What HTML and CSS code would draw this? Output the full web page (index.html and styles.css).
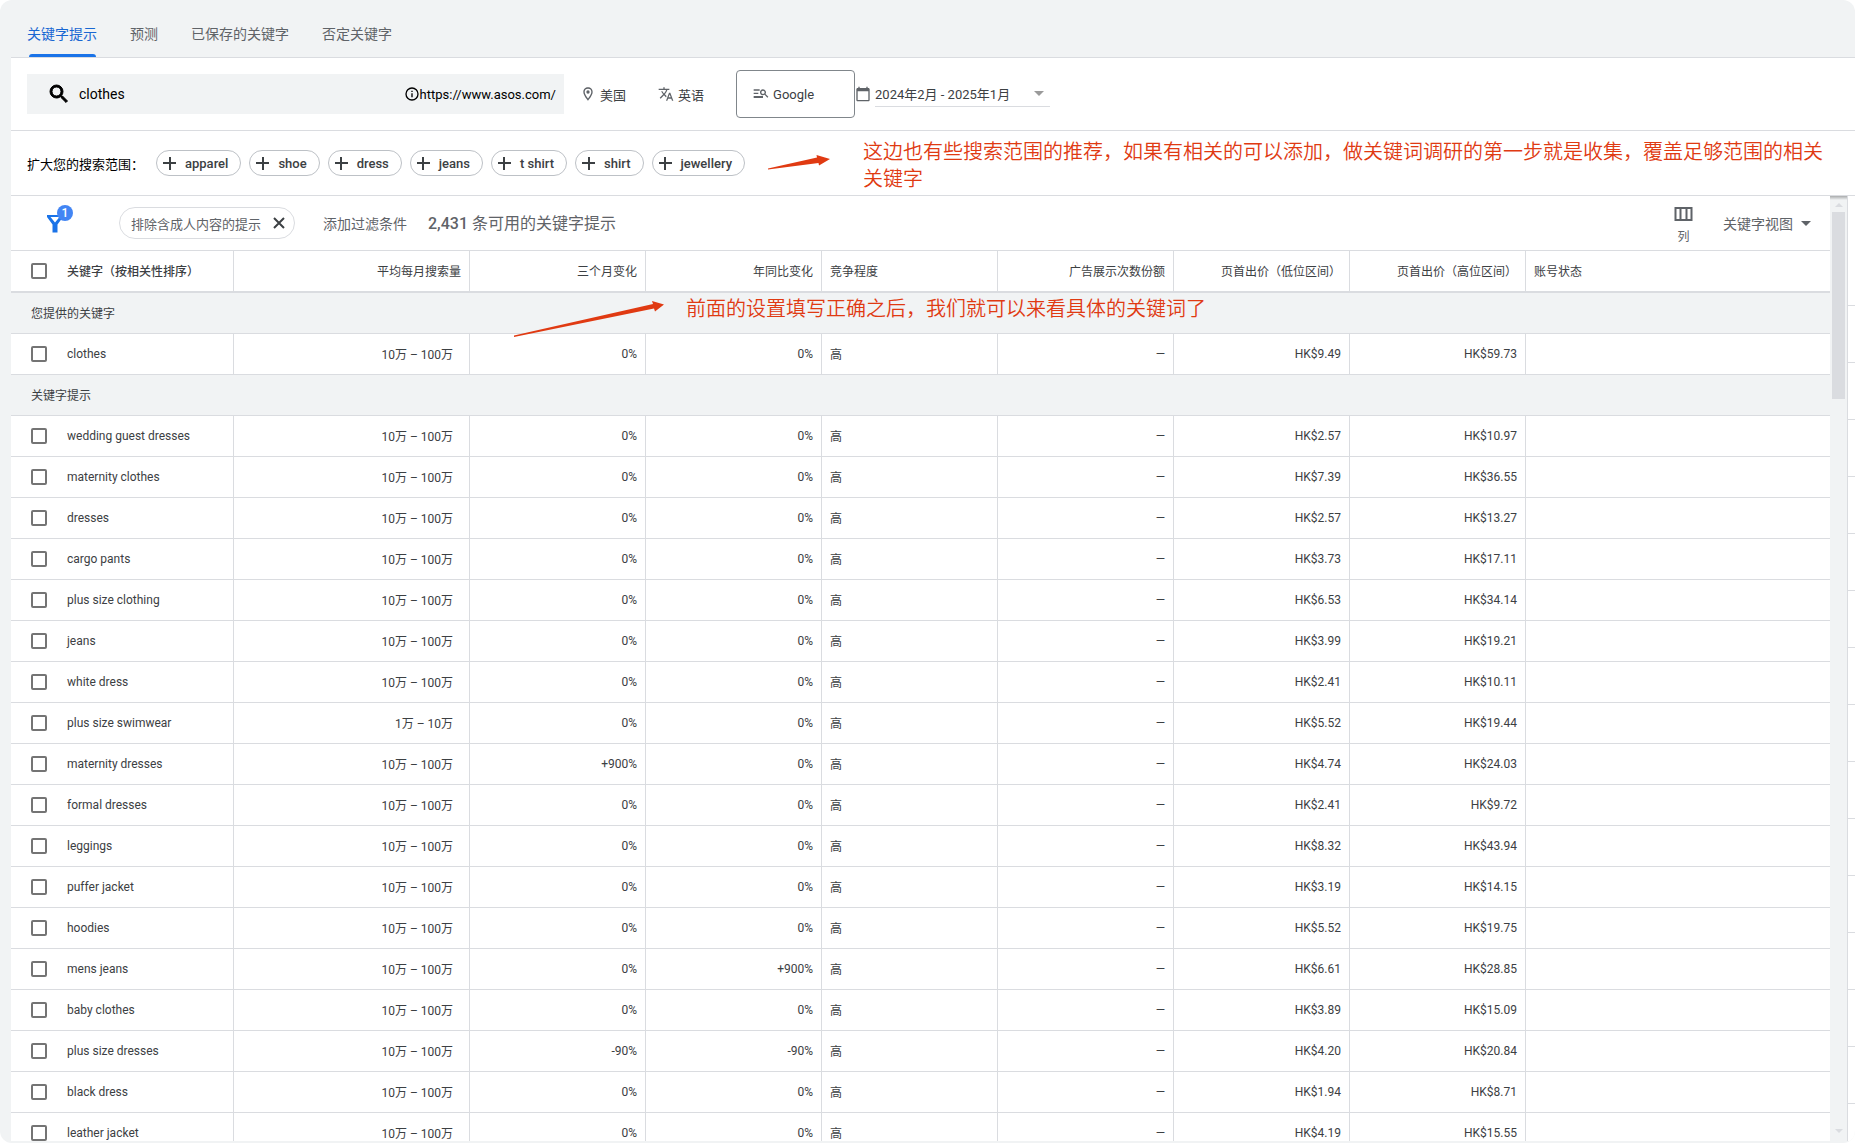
FILE: index.html
```html
<!DOCTYPE html>
<html lang="zh-CN">
<head>
<meta charset="utf-8">
<title>关键字提示</title>
<link rel="stylesheet" href="styles.css">
</head>
<body>
<div class="app">
  <nav class="tabs">
    <a class="tab tab-active" href="#ideas">关键字提示</a>
    <a class="tab" href="#forecast">预测</a>
    <a class="tab" href="#saved">已保存的关键字</a>
    <a class="tab" href="#negative">否定关键字</a>
  </nav>

  <div class="search-row">
    <div class="search-box">
      <svg class="icon-search" viewBox="0 0 24 24"><path d="M15.5 14h-.79l-.28-.27A6.47 6.47 0 0 0 16 9.5 6.5 6.5 0 1 0 9.5 16c1.61 0 3.09-.59 4.23-1.57l.27.28v.79l5 4.99L20.49 19l-4.99-5zm-6 0C7.01 14 5 11.99 5 9.5S7.01 5 9.5 5 14 7.01 14 9.5 11.99 14 9.5 14z"/></svg>
      <input class="search-input" type="text" value="clothes" aria-label="关键字">
      <svg class="icon-info" viewBox="0 0 24 24"><path d="M11 7h2v2h-2zm0 4h2v6h-2zm1-9a10 10 0 1 0 0 20 10 10 0 0 0 0-20zm0 18a8 8 0 1 1 0-16 8 8 0 0 1 0 16z"/></svg>
      <span class="site">https://www.asos.com/</span>
    </div>
    <button class="setting setting-place" type="button">
      <svg class="icon-small" viewBox="0 0 24 24"><path d="M12 2C8.13 2 5 5.13 5 9c0 5.25 7 13 7 13s7-7.75 7-13c0-3.87-3.13-7-7-7zM7 9a5 5 0 0 1 10 0c0 2.88-2.88 7.19-5 9.88C9.92 16.21 7 11.85 7 9z"/><circle cx="12" cy="9" r="2.5"/></svg>
      <span>美国</span>
    </button>
    <button class="setting setting-lang" type="button">
      <svg class="icon-small" viewBox="0 0 24 24"><path d="M12.87 15.07l-2.54-2.51.03-.03A17.52 17.52 0 0 0 14.07 6H17V4h-7V2H8v2H1v2h11.17C11.5 7.92 10.44 9.75 9 11.35 8.07 10.32 7.3 9.19 6.69 8h-2c.73 1.63 1.73 3.17 2.98 4.56l-5.09 5.02L4 19l5-5 3.11 3.11.76-2.04zM18.5 10h-2L12 22h2l1.12-3h4.75L21 22h2l-4.500-12zm-2.620 7l1.620-4.330L19.120 17h-3.240z"/></svg>
      <span>英语</span>
    </button>
    <button class="network" type="button">
      <svg class="icon-small" viewBox="0 0 24 24"><path d="M1 5h9v2H1zm0 5h7v2H1zm0 5h14v3H1zM15 5a4.500 4.500 0 1 0 2.400 8.300L21.600 17.500 23 16.100l-4.200-4.200A4.500 4.500 0 0 0 15 5zm0 2a2.500 2.500 0 1 1 0 5 2.500 2.500 0 0 1 0-5z"/></svg>
      <span>Google</span>
    </button>
    <button class="dates" type="button">
      <svg class="icon-small" viewBox="0 0 24 24"><path d="M20 3h-1V1h-2v2H7V1H5v2H4c-1.100 0-2 .9-2 2v16c0 1.100.9 2 2 2h16c1.100 0 2-.9 2-2V5c0-1.100-.9-2-2-2zm0 18H4V8h16v13z"/></svg>
      <span class="dates-value"><span>2024年2月 - 2025年1月</span><span class="caret caret-light"></span></span>
    </button>
  </div>

  <div class="broaden">
    <span class="broaden-label">扩大您的搜索范围：</span>
    <div class="chips">
      <button class="chip" type="button"><span class="plus"></span>apparel</button>
      <button class="chip" type="button"><span class="plus"></span>shoe</button>
      <button class="chip" type="button"><span class="plus"></span>dress</button>
      <button class="chip" type="button"><span class="plus"></span>jeans</button>
      <button class="chip" type="button"><span class="plus"></span>t shirt</button>
      <button class="chip" type="button"><span class="plus"></span>shirt</button>
      <button class="chip" type="button"><span class="plus"></span>jewellery</button>
    </div>
    <svg class="arrow-short" viewBox="0 0 62 16"><path d="M0 13.500L49 2.500 48.500 0 62 4 51 10.500 50.500 8 0 14.500z"/></svg>
    <p class="note">这边也有些搜索范围的推荐，如果有相关的可以添加，做关键词调研的第一步就是收集，覆盖足够范围的相关关键字</p>
  </div>

  <div class="results">
    <div class="panel">
      <div class="toolbar">
        <button class="filter" type="button" aria-label="过滤条件">
          <svg class="icon-filter" viewBox="0 0 16 18"><path d="M0 0h16v2L10.500 9.500V17.500H5.500V9.500L0 2zM3.500 2L8 7.600 12.500 2z"/></svg>
          <span class="badge">1</span>
        </button>
        <button class="filter-chip" type="button"><span>排除含成人内容的提示</span>
          <svg class="icon-close" viewBox="0 0 12 12"><path d="M1 1l10 10M11 1L1 11"/></svg>
        </button>
        <button class="add-filter" type="button">添加过滤条件</button>
        <span class="count"><b>2,431</b> 条可用的关键字提示</span>
        <button class="columns" type="button">
          <svg class="icon-columns" viewBox="0 0 18 14"><path d="M0 0h18v14H0zM2 2v10h3V2zm5 0v10h4V2zm6 0v10h3V2z" fill-rule="evenodd"/></svg>
          <span>列</span>
        </button>
        <button class="view" type="button">关键字视图<span class="caret"></span></button>
      </div>
      <table class="grid">
        <colgroup><col class="c-key"><col class="c-vol"><col class="c-std"><col class="c-std"><col class="c-std"><col class="c-std"><col class="c-std"><col class="c-std"><col></colgroup>
        <thead>
          <tr><th class="key"><label><input type="checkbox"><b>关键字（按相关性排序）</b></label></th><th>平均每月搜索量</th><th>三个月变化</th><th>年同比变化</th><th class="left">竞争程度</th><th>广告展示次数份额</th><th>页首出价（低位区间）</th><th>页首出价（高位区间）</th><th class="left">账号状态</th></tr>
        </thead>
        <tbody id="rows"></tbody>
      </table>
      <svg class="arrow-long" viewBox="0 0 152 36"><path d="M0 34.500L139 3 138 0 150 3.500 141 10.500 140 7.500 0 36z"/></svg>
      <p class="note note-table">前面的设置填写正确之后，我们就可以来看具体的关键词了</p>
    </div>
    <div class="scrollbar"><span class="sb-up"></span><span class="sb-thumb"></span><span class="sb-down"></span></div>
    <div class="edge"></div>
  </div>
</div>
<script src="rows.js"></script>
</body>
</html>
```
FILE: rows.js
```js
const provided = [["clothes", "9.49", "59.73"]];
const ideas = [
  ["wedding guest dresses", "2.57", "10.97"],
  ["maternity clothes", "7.39", "36.55"],
  ["dresses", "2.57", "13.27"],
  ["cargo pants", "3.73", "17.11"],
  ["plus size clothing", "6.53", "34.14"],
  ["jeans", "3.99", "19.21"],
  ["white dress", "2.41", "10.11"],
  ["plus size swimwear", "5.52", "19.44", { volume: "1万 – 10万" }],
  ["maternity dresses", "4.74", "24.03", { quarter: "+900%" }],
  ["formal dresses", "2.41", "9.72"],
  ["leggings", "8.32", "43.94"],
  ["puffer jacket", "3.19", "14.15"],
  ["hoodies", "5.52", "19.75"],
  ["mens jeans", "6.61", "28.85", { year: "+900%" }],
  ["baby clothes", "3.89", "15.09"],
  ["plus size dresses", "4.20", "20.84", { quarter: "-90%", year: "-90%" }],
  ["black dress", "1.94", "8.71"],
  ["leather jacket", "4.19", "15.55"]
];

const section = (title) => `<tr class="section"><td colspan="9">${title}</td></tr>`;

const row = ([name, low, high, extra = {}]) => `<tr>
  <td class="key"><label><input type="checkbox"><span>${name}</span></label></td>
  <td class="volume">${extra.volume || "10万 – 100万"}</td>
  <td>${extra.quarter || "0%"}</td>
  <td>${extra.year || "0%"}</td>
  <td class="left level">高</td>
  <td>—</td>
  <td>HK$${low}</td>
  <td>HK$${high}</td>
  <td class="left"></td>
</tr>`;

document.getElementById("rows").innerHTML =
  section("您提供的关键字") + provided.map(row).join("") +
  section("关键字提示") + ideas.map(row).join("");
```
FILE: styles.css
```css
* { box-sizing: border-box; }

html { background: #fff; }

body {
  margin: 0;
  font-family: Roboto, "Noto Sans CJK SC", sans-serif;
  font-size: 14px;
  color: #3c4043;
}

button {
  margin: 0;
  padding: 0;
  border: 0;
  background: none;
  font: inherit;
  color: inherit;
}

svg { flex: none; fill: currentColor; }

.app {
  display: flex;
  flex-direction: column;
  height: 100vh;
  padding: 0 0 2px 11px;
  background: #f1f3f4;
  border-radius: 12px;
  overflow: hidden;
}

.tabs {
  flex: none;
  display: flex;
  gap: 33px;
  height: 58px;
  padding-left: 16px;
  border-bottom: 1px solid #dadce0;
}

.tab {
  position: relative;
  line-height: 68px;
  color: #5f6368;
  text-decoration: none;
}

.tab-active { color: #1967d2; }

.tab-active::after {
  content: "";
  position: absolute;
  left: 2px;
  right: 1px;
  bottom: 0;
  height: 3px;
  border-radius: 3px 3px 0 0;
  background: #1a73e8;
}

.search-row {
  flex: none;
  display: flex;
  align-items: center;
  height: 73px;
  padding-left: 16px;
  background: #fff;
  border-bottom: 1px solid #dadce0;
  font-size: 13px;
}

.search-box {
  display: flex;
  align-items: center;
  width: 537px;
  height: 40px;
  padding: 0 8px 0 20px;
  background: #f1f3f4;
  color: #000;
}

.icon-search { width: 24px; height: 24px; stroke: currentColor; }

.search-input {
  flex: 1;
  min-width: 0;
  margin-left: 8px;
  padding: 0;
  border: 0;
  background: none;
  font: inherit;
  font-size: 14px;
  color: inherit;
}

.icon-info { width: 16px; height: 16px; }

.icon-small { width: 16px; height: 16px; color: #5f6368; }

.setting { display: flex; align-items: center; gap: 4px; }
.setting-place { margin-left: 16px; }
.setting-lang { margin-left: 32px; }

.network {
  display: flex;
  align-items: center;
  gap: 4px;
  width: 119px;
  height: 48px;
  margin-left: 32px;
  padding-left: 16px;
  border: 1px solid #80868b;
  border-radius: 4px;
}

.dates { display: flex; align-items: center; gap: 4px; }

.dates-value {
  display: flex;
  align-items: center;
  justify-content: space-between;
  width: 175px;
  height: 25px;
  padding-right: 6px;
  border-bottom: 1px solid #dadce0;
}

.caret {
  border: 5px solid transparent;
  border-top-color: #5f6368;
  border-bottom: 0;
}

.caret-light { border-top-color: #9a9a9a; }

.broaden {
  flex: none;
  display: flex;
  align-items: center;
  height: 65px;
  padding: 0 24px 0 16px;
  background: #fff;
  border-bottom: 1px solid #dadce0;
}

.broaden-label { width: 129px; font-size: 13px; color: #000; white-space: nowrap; }

.chips { display: flex; gap: 8px; }

.chip {
  display: flex;
  align-items: center;
  gap: 9px;
  height: 26px;
  padding: 0 12px 0 6px;
  border: 1px solid #bdc1c6;
  border-radius: 13px;
  font-size: 13px;
  font-weight: 500;
}

.plus {
  width: 13px;
  height: 13px;
  background:
    linear-gradient(#3c4043, #3c4043) center / 13px 2px no-repeat,
    linear-gradient(#3c4043, #3c4043) center / 2px 13px no-repeat;
}

.arrow-short { width: 62px; height: 16px; margin-left: 23px; color: #e03a12; }

.note {
  margin: 0;
  font-family: "Noto Sans CJK SC", sans-serif;
  font-size: 20px;
  font-weight: 350;
  line-height: 27px;
  color: #e03a12;
}

.broaden .note { flex: 1; margin-left: 33px; padding-top: 1px; }

.results { flex: 1; min-height: 0; display: flex; }

.panel {
  position: relative;
  flex: 1;
  min-width: 0;
  overflow: hidden;
  background: #fff;
}

.toolbar {
  display: flex;
  align-items: center;
  height: 55px;
  padding: 0 19px 0 36px;
  border-bottom: 1px solid #dadce0;
  color: #5f6368;
}

.filter { position: relative; width: 26px; height: 36px; color: #1a73e8; }
.icon-filter { display: block; width: 16px; height: 18px; margin-top: 2px; }

.badge {
  position: absolute;
  top: 0;
  right: 0;
  width: 16px;
  height: 16px;
  border-radius: 8px;
  background: #4285f4;
  color: #fff;
  font-size: 12px;
  font-weight: 500;
  line-height: 16px;
}

.filter-chip {
  display: flex;
  align-items: center;
  gap: 12px;
  height: 32px;
  margin-left: 46px;
  padding: 0 9px 0 11px;
  border: 1px solid #dadce0;
  border-radius: 16px;
  font-size: 13px;
}

.icon-close { width: 12px; height: 12px; stroke: #3c4043; stroke-width: 2; }
.add-filter { margin-left: 28px; }
.count { margin-left: 21px; padding-bottom: 3px; font-size: 16px; }
.count b { font-weight: 500; }

.columns {
  display: flex;
  flex-direction: column;
  align-items: center;
  gap: 7px;
  margin-left: auto;
  padding-top: 7px;
  font-size: 12px;
  line-height: 18px;
}

.icon-columns { width: 19px; height: 14px; }
.view { display: flex; align-items: center; gap: 8px; margin-left: 30px; }

.grid {
  width: 100%;
  table-layout: fixed;
  border-collapse: separate;
  border-spacing: 0;
  font-size: 12px;
}

.c-key { width: 223px; }
.c-vol { width: 236px; }
.c-std { width: 176px; }

.grid th,
.grid td {
  height: 41px;
  padding: 0 8px;
  border-right: 1px solid #dadce0;
  border-bottom: 1px solid #dadce0;
  font-weight: 400;
  text-align: right;
  line-height: 18px;
  white-space: nowrap;
}

.grid th { height: 42px; padding-top: 2px; border-bottom-width: 2px; }
.grid th:last-child, .grid td:last-child { border-right: 0; }
.grid .left { text-align: left; }
.grid .level { padding-top: 2px; }
.grid .key { padding-top: 0; padding-left: 20px; text-align: left; }
.grid .volume { padding-top: 2px; padding-right: 16px; }
.grid .section td { padding-top: 2px; padding-left: 20px; background: #f1f3f4; text-align: left; }

.key label { display: flex; align-items: center; gap: 20px; }
.key b { padding-top: 2px; font-weight: 500; }

.key input {
  appearance: none;
  width: 16px;
  height: 16px;
  margin: 0;
  border: 2px solid #747474;
  border-radius: 2px;
}

.arrow-long {
  position: absolute;
  left: 503px;
  top: 105px;
  width: 152px;
  height: 36px;
  color: #e03a12;
}

.note-table { position: absolute; left: 675px; top: 98px; white-space: nowrap; }

.scrollbar {
  display: flex;
  flex-direction: column;
  align-items: center;
  width: 18px;
  padding: 7px 0 8px;
  background: linear-gradient(#a9abac, #f1f3f4 4px);
  border-right: 1px solid #dadce0;
}

.sb-up { border: 4px solid transparent; border-bottom-color: #dadce0; border-top: 0; }
.sb-thumb { width: 13px; height: 187px; margin-top: 5px; background: #dadce0; }
.sb-down { margin-top: auto; border: 4px solid transparent; border-top-color: #dadce0; border-bottom: 0; }

/* Row lines of the neighbouring panel, starting below its header */
.edge {
  width: 7px;
  background:
    linear-gradient(#fff, #fff) top / 100% 60px no-repeat,
    repeating-linear-gradient(#fff 0 52px, #dadce0 52px 53px, #fff 53px 57px);
}
```
